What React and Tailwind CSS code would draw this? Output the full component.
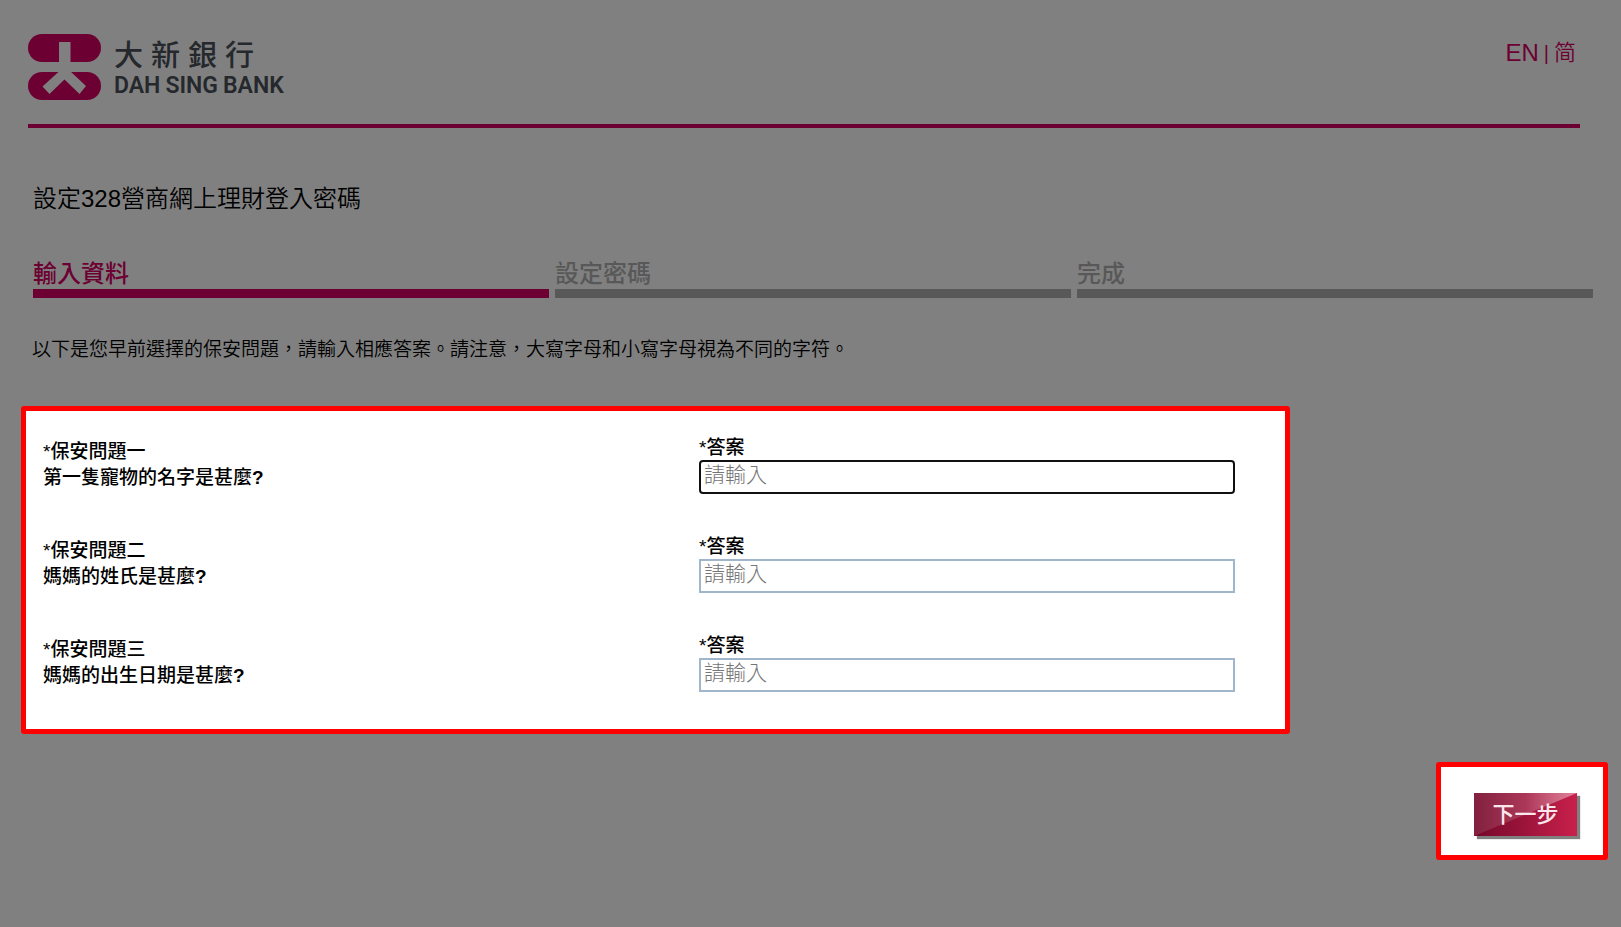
const SANS = "font-['Liberation_Sans','Noto_Sans_CJK_TC',sans-serif]";

const steps = [
  { label: "輸入資料", active: true },
  { label: "設定密碼", active: false },
  { label: "完成", active: false },
];

const questions = [
  { id: "q1", title: "*保安問題一", text: "第一隻寵物的名字是甚麼", focused: true },
  { id: "q2", title: "*保安問題二", text: "媽媽的姓氏是甚麼", focused: false },
  { id: "q3", title: "*保安問題三", text: "媽媽的出生日期是甚麼", focused: false },
];

function Logo() {
  return (
    <div className="flex items-start gap-[13px]">
      <svg viewBox="0 0 73 66" className="h-[66px] w-[73px]" aria-hidden="true">
        <rect x="0" y="0" width="73" height="28" rx="14" fill="#6d0032" />
        <rect x="0" y="38" width="73" height="28" rx="14" fill="#6d0032" />
        <polygon
          points="31,8 42.5,8 42.5,37.5 58,52 51.5,60 36.5,45.5 21.5,60 14.5,52.5 31,37.5"
          fill="#808080"
        />
      </svg>
      <div className="flex flex-col pt-[5px] text-[#25282c]">
        <div className="flex gap-2 text-[29px] leading-[34px] font-medium">
          {["大", "新", "銀", "行"].map((c) => (
            <span key={c}>{c}</span>
          ))}
        </div>
        <div className="flex gap-[5px] font-['Roboto',sans-serif] text-[23px] leading-[26px] font-semibold">
          <span>DAH</span>
          <span>SING</span>
          <span>BANK</span>
        </div>
      </div>
    </div>
  );
}

function Question({ q }) {
  return (
    <div className="grid h-[99px] grid-cols-[656fr_536fr] text-[19px] font-medium text-black">
      <div className="pt-1 leading-[26px]">
        <p>{q.title}</p>
        <p>
          {q.text}
          <span className="font-bold">?</span>
        </p>
      </div>
      <div className="flex flex-col">
        <label htmlFor={q.id} className="leading-[25px]">
          *答案
        </label>
        <input
          id={q.id}
          type="text"
          placeholder="請輸入"
          className={
            q.focused
              ? "h-[34px] w-full rounded-[4px] border-2 border-[#101010] bg-white px-[3px] pb-[5px] text-[21px] font-light outline-none placeholder:text-[#757575]"
              : "h-[34px] w-full border-2 border-[#9fb6cb] bg-white px-[3px] pb-[5px] text-[21px] font-light outline-none placeholder:text-[#757575]"
          }
        />
      </div>
    </div>
  );
}

export default function App() {
  return (
    <div className={`min-h-screen bg-[#808080] pb-16 ${SANS}`}>
      <header className="mr-[41px] ml-7 flex items-start justify-between border-b-4 border-[#6d0032] pt-[34px] pb-6">
        <Logo />
        <nav className="flex items-center gap-[5px] pt-[3px] pr-1 text-[#6d0032]">
          <a href="#en" className="text-[24px] leading-8">EN</a>
          <span className="text-[20px] leading-8">|</span>
          <a href="#sc" className="font-['Liberation_Sans','Noto_Sans_CJK_SC',sans-serif] text-[22px] leading-7 font-[350]">简</a>
        </nav>
      </header>

      <main className="pr-[13px] pl-[21px]">
        <h1 className="mt-[53px] ml-3 text-[24px] leading-9 font-[350] text-black">設定328營商網上理財登入密碼</h1>

        <ol className="mt-10 mr-[15px] ml-3 grid grid-cols-3 gap-[6px]">
          {steps.map((s) => (
            <li
              key={s.label}
              className={
                s.active
                  ? "border-b-9 border-[#6d0032] pt-[2px] text-[24px] leading-[30px] font-medium text-[#6d0032]"
                  : "border-b-9 border-[#585858] pt-[2px] text-[24px] leading-[30px] font-medium text-[#585858]"
              }
            >
              {s.label}
            </li>
          ))}
        </ol>

        <p className="mt-[38px] ml-[11px] text-[19px] leading-7 font-[350] text-black">
          以下是您早前選擇的保安問題，請輸入相應答案。請注意，大寫字母和小寫字母視為不同的字符。
        </p>

        <form>
          <div className="mt-[42px] h-[328px] max-w-[1269px] rounded-[3px] border-5 border-[#ff0000] bg-white pt-6 pr-[50px] pl-[17px]">
            {questions.map((q) => (
              <Question key={q.id} q={q} />
            ))}
          </div>

          <div className="mt-7 ml-auto flex w-[172px] rounded-[3px] border-5 border-[#ff0000] bg-white pt-[26px] pr-[26px] pb-[19px] pl-[33px]">
            <button
              type="button"
              className="relative h-[43px] w-[103px] bg-linear-to-r from-[#74082a] to-[#c8204c] text-[22px] font-medium text-[#fbe6ec] shadow-[3px_3px_1px_#808080]"
            >
              <span className="absolute inset-0 bg-linear-to-r from-white/10 via-white/15 to-white/45 [clip-path:polygon(0_0,100%_0,0_100%)]" />
              <span className="relative">下一步</span>
            </button>
          </div>
        </form>
      </main>
    </div>
  );
}
